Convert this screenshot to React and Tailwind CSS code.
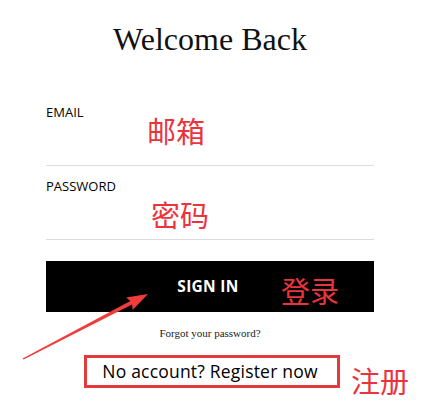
export default function App() {
  return (
    <div className="relative w-[434px] h-[407px] bg-white overflow-hidden">
      <div className="ml-[46px] w-[328px] pt-[19px] flex flex-col">
        <h1 className="text-center text-[32px] leading-[40px] text-[#111] font-['Liberation_Serif',serif]">
          Welcome Back
        </h1>

        <label className="mt-[45px] text-[13px] leading-[16px] text-[#000] font-medium font-['Open_Sans',sans-serif]">
          EMAIL
        </label>
        <div className="h-[46px] border-b border-[#dcdcdc]" />

        <label className="mt-[12px] text-[13px] leading-[16px] text-[#000] font-medium font-['Open_Sans',sans-serif]">
          PASSWORD
        </label>
        <div className="h-[46px] border-b border-[#dcdcdc]" />

        <button className="mt-[21px] h-[51px] bg-black text-white text-[15.5px] font-bold tracking-[0.3px] font-['Open_Sans',sans-serif] flex items-center justify-center">
          <span className="-ml-[4px]">SIGN IN</span>
        </button>

        <p className="mt-[14px] text-center text-[11px] leading-[14px] text-[#222] font-['Liberation_Serif',serif]">
          Forgot your password?
        </p>

        <a className="mt-[15px] ml-[38px] w-[256px] h-[33px] border-[3px] border-[#e3393c] flex items-center justify-center pr-[4px] text-[17.5px] tracking-[0.2px] text-[#000] font-['Open_Sans',sans-serif]">
          No account? Register now
        </a>
      </div>

      {/* annotations */}
      <span className="absolute left-[147px] top-[116px] text-[29px] leading-none text-[#ea343c] font-['Noto_Sans_CJK_SC',sans-serif]">邮箱</span>
      <span className="absolute left-[151px] top-[200px] text-[29px] leading-none text-[#ea343c] font-['Noto_Sans_CJK_SC',sans-serif]">密码</span>
      <span className="absolute left-[281px] top-[276px] text-[29px] leading-none text-[#ea343c] font-['Noto_Sans_CJK_SC',sans-serif]">登录</span>
      <span className="absolute left-[351px] top-[366px] text-[29px] leading-none text-[#ea343c] font-['Noto_Sans_CJK_SC',sans-serif]">注册</span>

      <svg className="absolute left-0 top-0 pointer-events-none" width="434" height="407">
        <polygon
          points="22.6,358.6 130.3,301 126.2,297.5 148,294 132.6,309.9 132.1,304.6 23.6,359.6"
          fill="#f03c3c"
        />
      </svg>
    </div>
  )
}
